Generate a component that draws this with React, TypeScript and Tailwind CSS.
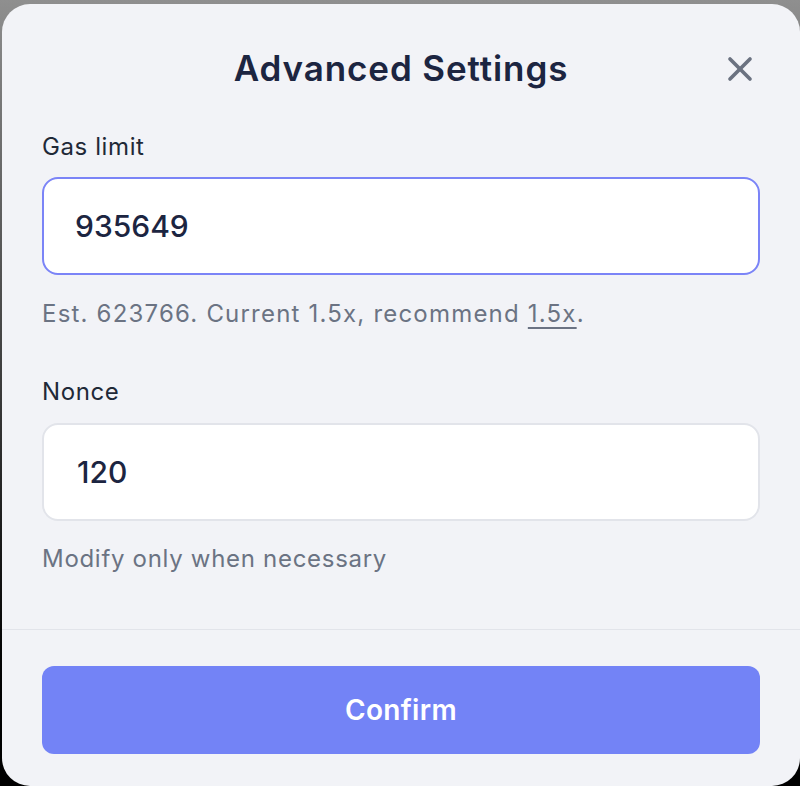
import { X } from "lucide-react";

export default function App() {
  return (
    <div className="h-[786px] w-[800px] overflow-hidden bg-gradient-to-b from-[#8f8f8f] via-[#3a3a3a] to-black pl-[2px] pt-[4px] font-['Inter',sans-serif]">
      <div className="flex h-full flex-col rounded-[28px] bg-[#f2f3f7]">
        <div className="relative flex h-[127px] items-start justify-center pt-[40px]">
          <h1 className="text-[35px] font-semibold leading-[48px] tracking-[0.9px] text-[#1c2541]">
            Advanced Settings
          </h1>
          <button className="absolute right-[40px] top-[45px] text-[#6b7280]">
            <X className="size-[40px]" strokeWidth={2.2} />
          </button>
        </div>

        <div className="flex flex-col px-[40px]">
          <label className="text-[24px] leading-[32px] tracking-[0.6px] text-[#1f2937]">Gas limit</label>
          <div className="mt-[14px] flex h-[98px] items-center rounded-[16px] border-2 border-[#7b84f7] bg-white pl-[31px]">
            <span className="text-[30px] font-medium text-[#1c2541]">935649</span>
          </div>
          <p className="mt-[23px] text-[24px] leading-[32px] tracking-[1.2px] text-[#6b7383]">
            Est. 623766. Current 1.5x, recommend{" "}
            <span className="underline decoration-[2px] underline-offset-[5px]">1.5x</span>.
          </p>

          <label className="mt-[46px] text-[24px] leading-[32px] tracking-[0.6px] text-[#1f2937]">Nonce</label>
          <div className="mt-[15px] flex h-[98px] items-center rounded-[16px] border-2 border-[#e2e4ea] bg-white pl-[33px]">
            <span className="text-[30px] font-medium text-[#1c2541]">120</span>
          </div>
          <p className="mt-[22px] text-[24px] leading-[32px] tracking-[0.7px] text-[#6b7383]">
            Modify only when necessary
          </p>
        </div>

        <div className="mt-[54px] border-t border-[#e2e4ea] px-[40px] pt-[36px]">
          <button className="flex h-[88px] w-full items-center justify-center rounded-[12px] bg-[#7383f6] text-[28px] font-semibold tracking-[0.3px] text-white">
            Confirm
          </button>
        </div>
      </div>
    </div>
  );
}
